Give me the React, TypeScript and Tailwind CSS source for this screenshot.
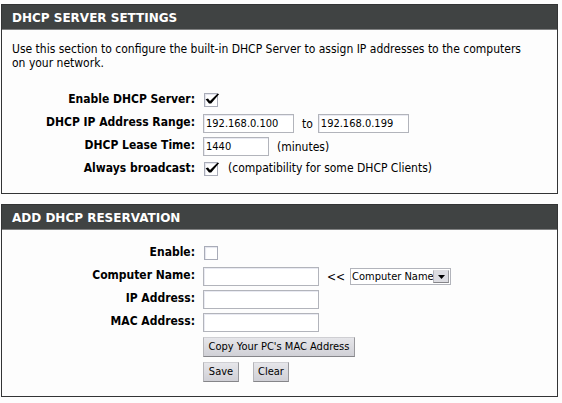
import { useState } from "react";
import type { ReactNode } from "react";

const fieldClass =
  "h-[19px] min-w-0 rounded-none border border-[#b2b4bb] bg-white px-[2px] text-[11px] leading-[14px] text-black shadow-[inset_1px_1px_0_#e9eaf2] outline-none";

const buttonClass =
  "h-5 border border-t-[#cfcfd3] border-l-[#b5b5b9] border-r-[#98989c] border-b-[#858589] bg-linear-to-b from-[#e6e6ea] to-[#d0d0d6] px-1 text-[11px] leading-[14px] whitespace-nowrap text-black";

function Panel({ title, children }: { title: string; children: ReactNode }) {
  return (
    <section className="border border-[#333435]">
      <h2 className="h-[25px] border-b border-[#808182] bg-[#404343] px-[10px] font-['DejaVu_Sans',sans-serif] text-[12px] leading-[26px] font-bold text-white">
        {title}
      </h2>
      <div className="px-[10px] pt-3 pb-[14px]">{children}</div>
    </section>
  );
}

function Row({ id, label, children }: { id: string; label: string; children: ReactNode }) {
  return (
    <div className="flex h-[19px] items-center gap-2">
      <label htmlFor={id} className="w-[183px] shrink-0 pb-[3px] text-right font-bold whitespace-nowrap">
        {label}
      </label>
      <div className="flex items-center gap-2">{children}</div>
    </div>
  );
}

function Check({ id, initial }: { id: string; initial: boolean }) {
  const [checked, setChecked] = useState(initial);
  return (
    <span className="ml-px grid h-4 w-4 shrink-0 items-start">
      <input
        id={id}
        type="checkbox"
        checked={checked}
        onChange={(e) => setChecked(e.target.checked)}
        className="col-start-1 row-start-1 size-[14px] appearance-none border border-[#a9acb8] bg-white shadow-[inset_1px_1px_1px_#e4e5ee]"
      />
      {checked && (
        <svg
          viewBox="0 0 16 14"
          className="pointer-events-none col-start-1 row-start-1 h-[14px] w-4"
          aria-hidden="true"
        >
          <path d="M1.6 6.3 L4 5.4 L6 8 L13.4 0.8 L15.2 1.1 L7.2 10.4 L5 10.4 Z" fill="#000" />
        </svg>
      )}
    </span>
  );
}

export default function App() {
  return (
    <main className="flex min-h-screen flex-col gap-[10px] bg-[#fdfdfd] pt-1 pr-[4px] pb-[6px] pl-px font-['DejaVu_Sans_Condensed','DejaVu_Sans',sans-serif] text-[12px] leading-[14px] text-black">
      <Panel title="DHCP SERVER SETTINGS">
        <p className="mb-[21px] pr-4">
          Use this section to configure the built-in DHCP Server to assign IP addresses to the computers on your
          network.
        </p>
        <form className="flex flex-col gap-1">
          <Row id="dhcp-enable" label="Enable DHCP Server:">
            <Check id="dhcp-enable" initial />
          </Row>
          <Row id="range-from" label="DHCP IP Address Range:">
            <input id="range-from" type="text" defaultValue="192.168.0.100" className={`${fieldClass} w-[91px]`} />
            <span className="flex items-center gap-[5px]">
              <label htmlFor="range-to">to</label>
              <input id="range-to" type="text" defaultValue="192.168.0.199" className={`${fieldClass} w-[91px]`} />
            </span>
          </Row>
          <Row id="lease" label="DHCP Lease Time:">
            <input id="lease" type="text" defaultValue="1440" className={`${fieldClass} w-[66px]`} />
            <span>(minutes)</span>
          </Row>
          <Row id="broadcast" label="Always broadcast:">
            <Check id="broadcast" initial />
            <span className="pb-[3px]">(compatibility for some DHCP Clients)</span>
          </Row>
        </form>
      </Panel>

      <Panel title="ADD DHCP RESERVATION">
        <form className="flex flex-col gap-1 pt-[2px]">
          <Row id="res-enable" label="Enable:">
            <Check id="res-enable" initial={false} />
          </Row>
          <Row id="res-name" label="Computer Name:">
            <input id="res-name" type="text" className={`${fieldClass} w-[116px]`} />
            <span className="flex items-center gap-[5px]">
              <label htmlFor="res-pick">&lt;&lt;</label>
              <span className="grid w-[101px] grid-cols-[1fr_17px] border border-[#b2b4bb] bg-white">
                <select
                  id="res-pick"
                  className="col-span-2 col-start-1 row-start-1 h-[15px] appearance-none bg-transparent pl-px text-[11px] leading-[14px] outline-none"
                >
                  <option>Computer Name</option>
                </select>
                <span className="pointer-events-none col-start-2 row-start-1 my-px mr-px flex items-center justify-center border border-t-[#dddde0] border-l-[#b5b5b9] border-r-[#98989c] border-b-[#858589] bg-[#dddde2]">
                  <svg viewBox="0 0 7 4" className="h-1 w-[7px]" aria-hidden="true">
                    <path d="M0 0 H7 L3.5 4 Z" fill="#000" />
                  </svg>
                </span>
              </span>
            </span>
          </Row>
          <Row id="res-ip" label="IP Address:">
            <input id="res-ip" type="text" className={`${fieldClass} w-[116px]`} />
          </Row>
          <Row id="res-mac" label="MAC Address:">
            <input id="res-mac" type="text" className={`${fieldClass} w-[116px]`} />
          </Row>
          <div className="flex flex-col items-start gap-[5px] pt-px pl-[191px]">
            <button type="button" className={`${buttonClass} min-w-[152px]`}>
              Copy Your PC's MAC Address
            </button>
            <div className="flex gap-[14px]">
              <button type="button" className={`${buttonClass} min-w-9`}>
                Save
              </button>
              <button type="reset" className={`${buttonClass} min-w-9`}>
                Clear
              </button>
            </div>
          </div>
        </form>
      </Panel>
    </main>
  );
}
